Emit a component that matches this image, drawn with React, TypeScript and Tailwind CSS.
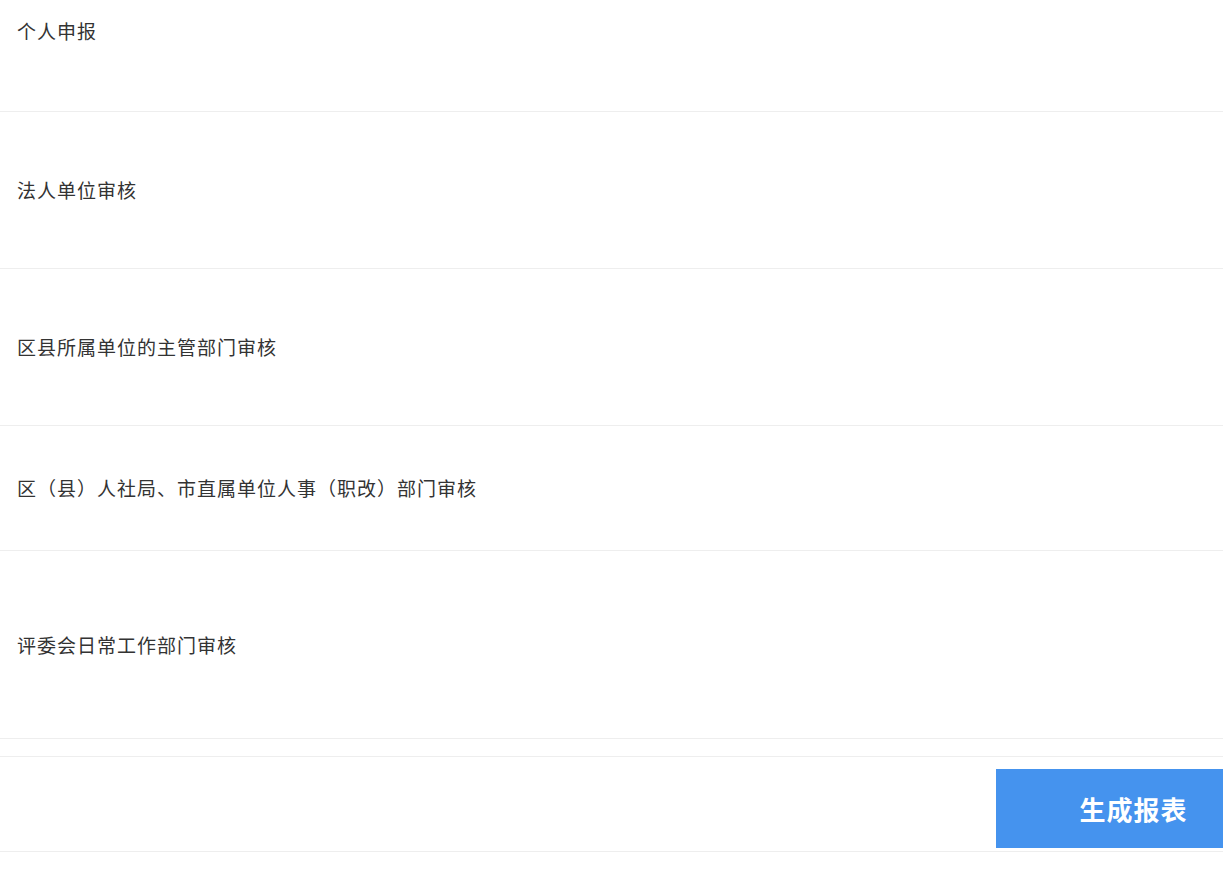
const font = { fontFamily: '"Noto Sans CJK SC", "Noto Sans", sans-serif' };

const steps = [
  { label: '个人申报', h: 'h-[112px]', pad: 'pt-[20px]', align: 'items-start' },
  { label: '法人单位审核', h: 'h-[157px]', pad: '', align: 'items-center' },
  { label: '区县所属单位的主管部门审核', h: 'h-[157px]', pad: '', align: 'items-center' },
  { label: '区（县）人社局、市直属单位人事（职改）部门审核', h: 'h-[125px]', pad: '', align: 'items-center' },
  { label: '评委会日常工作部门审核', h: 'h-[188px]', pad: '', align: 'items-center' },
];

export default function App() {
  return (
    <div className="h-[870px] w-full overflow-hidden bg-white" style={font}>
      {steps.map((s) => (
        <div
          key={s.label}
          className={`flex ${s.h} ${s.align} ${s.pad} border-b border-[#eeeeee] pl-[17px]`}
        >
          <span className="text-[19px] leading-[22px] tracking-[1px] text-[#333333]">{s.label}</span>
        </div>
      ))}
      <div className="h-[18px] border-b border-[#eeeeee]" />
      <div className="flex h-[95px] items-start justify-end overflow-hidden border-b border-[#eeeeee] pt-[12px]">
        <button className="-mr-[48px] flex h-[79px] w-[275px] shrink-0 items-center justify-center bg-[#4593ee] text-[26px] font-bold tracking-[1px] text-white">
          生成报表
        </button>
      </div>
    </div>
  );
}
